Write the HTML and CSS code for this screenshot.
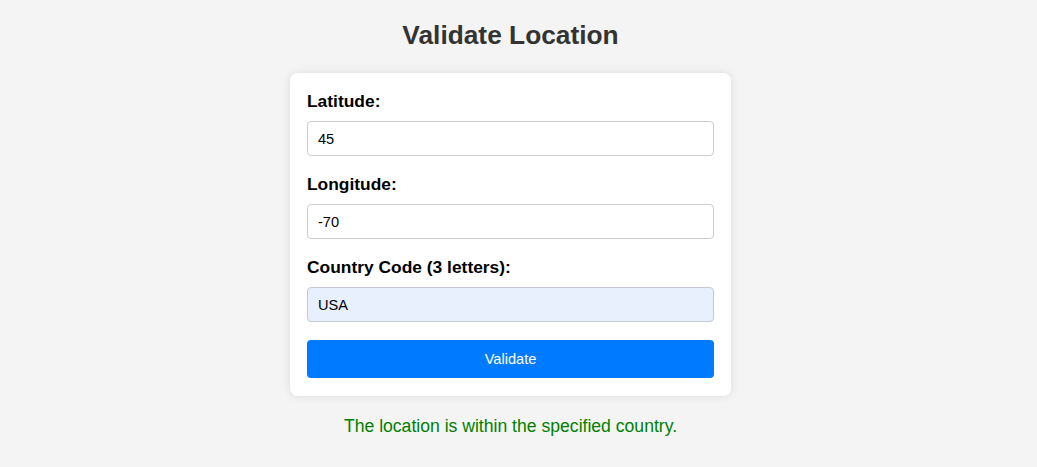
FILE: index.html
```html
<!DOCTYPE html>
<html lang="en">
<head>
<meta charset="utf-8">
<title>Validate Location</title>
<link rel="stylesheet" href="styles.css">
</head>
<body>
<main class="page">
  <h1 class="title">Validate Location</h1>
  <form class="card">
    <div class="field">
      <label class="label" for="lat">Latitude:</label>
      <input class="input" id="lat" type="text" value="45">
    </div>
    <div class="field">
      <label class="label" for="lon">Longitude:</label>
      <input class="input" id="lon" type="text" value="-70">
    </div>
    <div class="field field-last">
      <label class="label" for="cc">Country Code (3 letters):</label>
      <input class="input input-filled" id="cc" type="text" value="USA">
    </div>
    <button class="button" type="button">Validate</button>
  </form>
  <p class="message">The location is within the specified country.</p>
</main>
</body>
</html>
```

FILE: styles.css
```css
html, body {
  margin: 0;
  padding: 0;
  background: #f4f4f4;
}

body {
  font-family: "Liberation Sans", Arial, sans-serif;
}

.page {
  display: flex;
  flex-direction: column;
  align-items: center;
  padding: 20px 16px 20px 0;
}

.title {
  margin: 0 0 23px;
  font-size: 26.3px;
  line-height: 30px;
  font-weight: bold;
  color: #333;
}

.card {
  box-sizing: border-box;
  width: 441px;
  background: #fff;
  border-radius: 8px;
  box-shadow: 0 0 10px rgba(0, 0, 0, 0.1);
  padding: 19px 17px 18px;
  display: flex;
  flex-direction: column;
}

.field {
  display: flex;
  flex-direction: column;
  margin-bottom: 19px;
}

.field-last {
  margin-bottom: 18px;
}

.label {
  font-size: 17.4px;
  line-height: 18px;
  font-weight: bold;
  color: #000;
  margin-bottom: 11px;
}

.input {
  box-sizing: border-box;
  width: 100%;
  height: 35px;
  margin: 0;
  padding: 0 10px;
  border: 1px solid #ccc;
  border-radius: 4px;
  background: #fff;
  font-family: "Liberation Sans", Arial, sans-serif;
  font-size: 14.6px;
  color: #000;
}

.input-filled {
  background: #e8f0fe;
  border-color: #c5c9d1;
}

.button {
  box-sizing: border-box;
  width: 100%;
  height: 38px;
  border: none;
  border-radius: 4px;
  background: #007bff;
  color: #fff;
  font-family: "Liberation Sans", Arial, sans-serif;
  font-size: 14.6px;
  cursor: pointer;
}

.message {
  margin: 20px 0 0;
  font-size: 17.6px;
  line-height: 20px;
  color: #008000;
}
```
